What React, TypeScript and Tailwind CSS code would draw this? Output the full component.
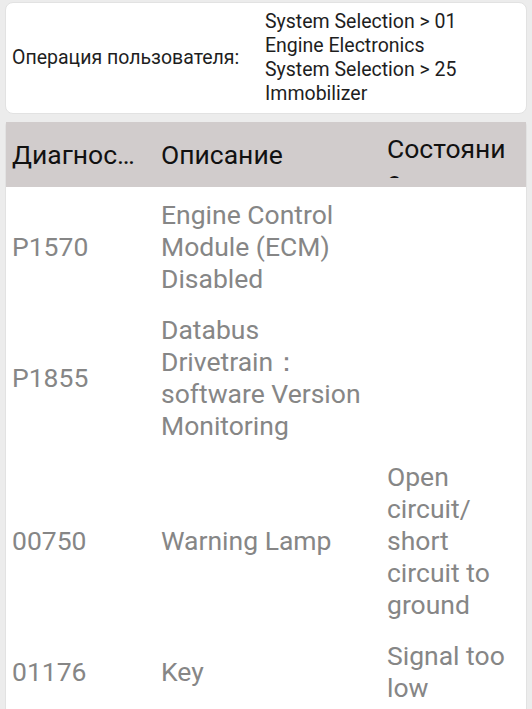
import React from "react";

const rows = [
  { code: "P1570", desc: ["Engine Control", "Module (ECM)", "Disabled"], status: [] as string[] },
  { code: "P1855", desc: ["Databus", "Drivetrain：", "software Version", "Monitoring"], status: [] as string[] },
  { code: "00750", desc: ["Warning Lamp"], status: ["Open", "circuit/", "short", "circuit to", "ground"] },
  { code: "01176", desc: ["Key"], status: ["Signal too", "low"] },
];

export default function App() {
  return (
    <div
      className="w-[532px] h-[709px] overflow-hidden bg-[#ececec] px-[5px] pt-[2px]"
      style={{ fontFamily: "Roboto, 'Noto Sans', sans-serif" }}
    >
      <div className="flex items-center h-[112px] bg-white rounded-[8px] border border-[#e2e2e2] pl-[6px]">
        <div className="w-[253px] text-[19.5px] leading-[24px] text-[#1e1e1e]">Операция пользователя:</div>
        <div className="text-[19.5px] leading-[24px] text-[#1e1e1e]">
          <div>System Selection &gt; 01</div>
          <div>Engine Electronics</div>
          <div>System Selection &gt; 25</div>
          <div>Immobilizer</div>
        </div>
      </div>
      <div className="mt-[8px] bg-white rounded-t-[4px] border-x border-[#e2e2e2] h-[700px]">
        <div className="flex h-[65px] bg-[#d1cccc] text-[26.5px] leading-[32px] text-[#111]">
          <div className="w-[155px] pl-[6px] self-center whitespace-nowrap">Диагнос…</div>
          <div className="w-[226px] self-center">Описание</div>
          <div className="w-[130px] mt-[11px] h-[45px] overflow-hidden break-all">Состояние</div>
        </div>
        {rows.map((r) => (
          <div key={r.code} className="flex items-center pt-[12px] pb-[7px] text-[26.5px] leading-[32px] text-[#868686]">
            <div className="w-[155px] pl-[6px]">{r.code}</div>
            <div className="w-[226px]">
              {r.desc.map((d) => (
                <div key={d} className="whitespace-nowrap">{d}</div>
              ))}
            </div>
            <div className="w-[130px]">
              {r.status.map((d) => (
                <div key={d} className="whitespace-nowrap">{d}</div>
              ))}
            </div>
          </div>
        ))}
      </div>
    </div>
  );
}
